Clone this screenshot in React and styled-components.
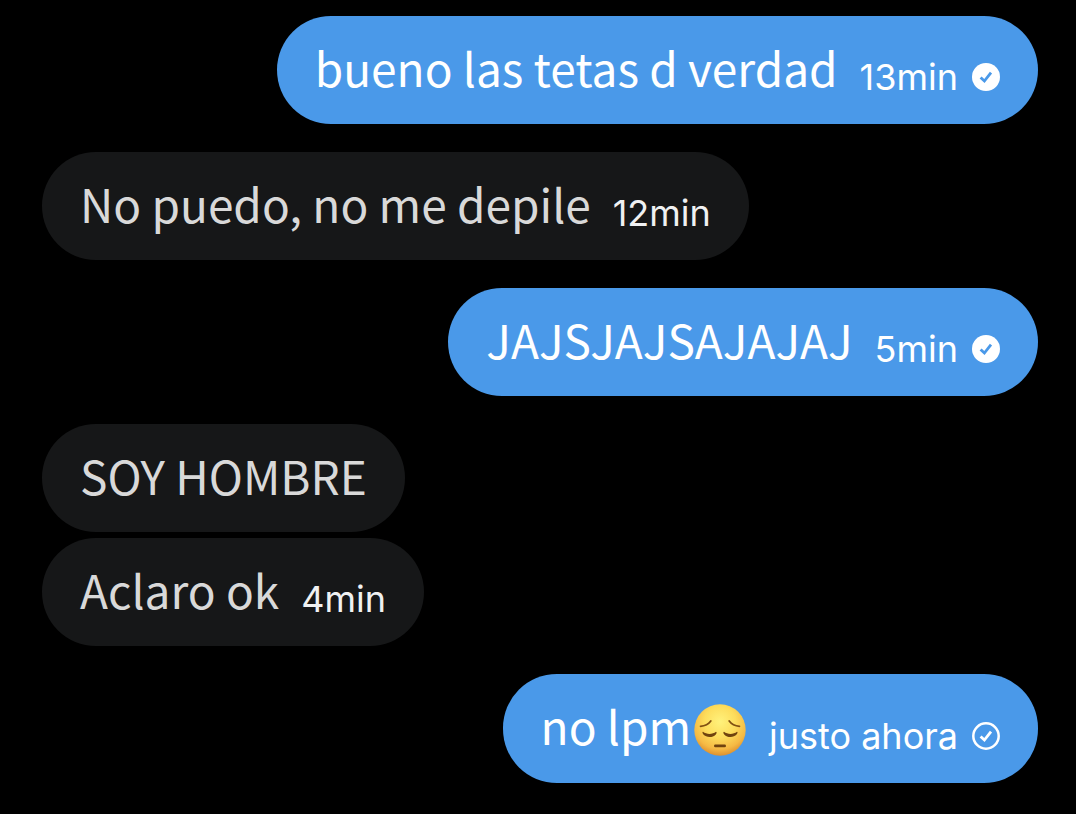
import React from "react";
import styled, { createGlobalStyle } from "styled-components";

const GlobalStyle = createGlobalStyle`
  * {
    box-sizing: border-box;
  }
  body {
    margin: 0;
    background: #000000;
  }
`;

const Chat = styled.main`
  display: flex;
  flex-direction: column;
  gap: 28px;
  padding: 16px 38px 31px 42px;
`;

const Group = styled.div`
  display: flex;
  flex-direction: column;
  align-items: ${(props) => (props.$mine ? "flex-end" : "flex-start")};
  gap: 6px;
`;

const Bubble = styled.div`
  display: flex;
  align-items: flex-end;
  gap: 22px;
  padding: 20px 38px 26px;
  border-radius: 54px;
  color: ${(props) => (props.$mine ? "#ffffff" : "#d9d9d9")};
  background: ${(props) => (props.$mine ? "#4a99e9" : "#161718")};
`;

const Message = styled.p`
  margin: 0;
  font-family: "Noto Sans CJK SC", sans-serif;
  font-size: 46px;
  line-height: 62px;
`;

const Meta = styled.span`
  display: flex;
  align-items: center;
  gap: 14px;
  color: ${(props) => (props.$mine ? "#ffffff" : "#f0f1f2")};
  font-family: Inter, sans-serif;
  font-size: 36px;
  line-height: 42px;
`;

const Icon = styled.svg`
  flex: none;
  width: 28px;
  height: 28px;
`;

const Face = styled.svg`
  width: 54px;
  height: 54px;
  margin-left: 2px;
  vertical-align: -12px;
`;

function Status({ seen }) {
  return (
    <Icon
      viewBox="0 0 28 28"
      fill="none"
      role="img"
      aria-label={seen ? "Visto" : "Enviado"}
    >
      {seen ? (
        <circle cx="14" cy="14" r="14" fill="#ffffff" />
      ) : (
        <circle cx="14" cy="14" r="12.7" stroke="#ffffff" strokeWidth="2.5" />
      )}
      <path
        d="M8.6 14.4 12.4 18 19 9.6"
        stroke={seen ? "#4a99e9" : "#ffffff"}
        strokeWidth="2.8"
      />
    </Icon>
  );
}

function Pensive() {
  return (
    <Face viewBox="0 0 54 54" fill="none" role="img" aria-label="😔">
      <defs>
        <radialGradient id="skin" cx="0.5" cy="0.34" r="0.68">
          <stop offset="0" stopColor="#fff27c" />
          <stop offset="0.45" stopColor="#fddd5c" />
          <stop offset="0.78" stopColor="#f5b944" />
          <stop offset="1" stopColor="#d98a2c" />
        </radialGradient>
      </defs>
      <circle cx="27" cy="27" r="25.7" fill="url(#skin)" />
      <g stroke="#805012" strokeWidth="1.8" strokeLinecap="round">
        <path d="M7.5 23.3C11.5 23 15.5 21.2 17.8 18" />
        <path d="M46.5 23.3C42.5 23 38.5 21.2 36.2 18" />
      </g>
      <g fill="#70430f">
        <path d="M10 28.8C13.5 31.6 19.5 31.6 23 28.8C24 29.2 23.8 30.4 22.8 31.4C19.3 35 13.4 34.8 10.2 31.2C9.3 30.1 9.2 29.1 10 28.8Z" />
        <path d="M44 28.8C40.5 31.6 34.5 31.6 31 28.8C30 29.2 30.2 30.4 31.2 31.4C34.7 35 40.6 34.8 43.8 31.2C44.7 30.1 44.8 29.1 44 28.8Z" />
        <rect x="21" y="41.5" width="12" height="2.8" rx="1.4" />
      </g>
    </Face>
  );
}

const groups = [
  {
    mine: true,
    items: [{ text: "bueno las tetas d verdad", time: "13min", seen: true }],
  },
  { items: [{ text: "No puedo, no me depile", time: "12min" }] },
  { mine: true, items: [{ text: "JAJSJAJSAJAJAJ", time: "5min", seen: true }] },
  { items: [{ text: "SOY HOMBRE" }, { text: "Aclaro ok", time: "4min" }] },
  { mine: true, items: [{ text: "no lpm", face: true, time: "justo ahora" }] },
];

function App() {
  return (
    <>
      <GlobalStyle />
      <Chat>
        {groups.map((group, i) => (
          <Group key={i} $mine={group.mine}>
            {group.items.map((item) => (
              <Bubble key={item.text} $mine={group.mine}>
                <Message>
                  {item.text}
                  {item.face && <Pensive />}
                </Message>
                {item.time && (
                  <Meta $mine={group.mine}>
                    <span>{item.time}</span>
                    {group.mine && <Status seen={item.seen} />}
                  </Meta>
                )}
              </Bubble>
            ))}
          </Group>
        ))}
      </Chat>
    </>
  );
}

export default App;
